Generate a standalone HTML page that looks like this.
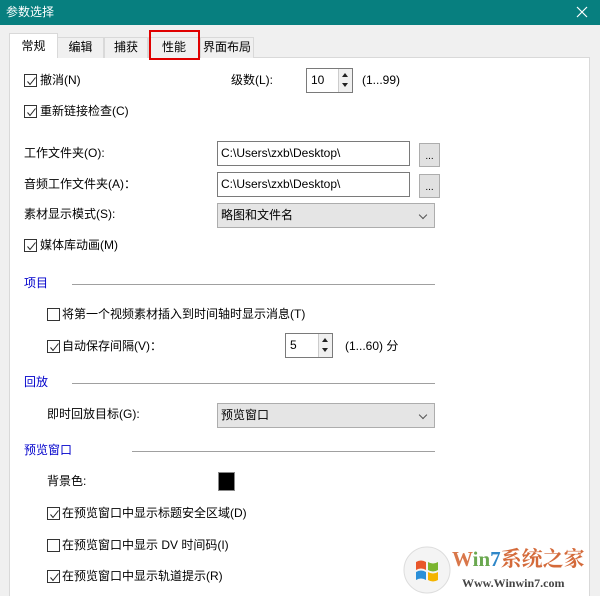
<!DOCTYPE html>
<html style="width:600px;height:596px;overflow:hidden"><head><meta charset="utf-8"><style>
*{margin:0;padding:0;box-sizing:border-box}
body{width:600px;height:596px;background:#f0f0f0;position:relative;overflow:hidden;font-family:"Liberation Sans","Noto Sans CJK SC",sans-serif;font-size:12px;color:#000}
.a{position:absolute;white-space:nowrap;line-height:16px}
.title{position:absolute;left:0;top:0;width:600px;height:25px;background:#077f7f;color:#fff;font-size:12px;line-height:24px;padding-left:6px}
.panel{position:absolute;left:9px;top:57px;width:581px;height:545px;background:#fff;border:1px solid #d9d9d9}
.tab{position:absolute;top:37px;height:21px;border:1px solid #d9d9d9;border-bottom:none;background:#f0f0f0;text-align:center;line-height:18px;white-space:nowrap}
.cb{position:absolute;width:13px;height:13px;border:1px solid #333;background:#fff}
.cb svg{position:absolute;left:1px;top:1px}
.inp{position:absolute;border:1px solid #7a7a7a;background:#fff;padding-left:3px;line-height:22px}
.btn{position:absolute;border:1px solid #adadad;background:#e1e1e1;text-align:center;font-size:10px;line-height:26px}
.cmb{position:absolute;border:1px solid #adadad;background:#e5e5e5;padding-left:3px;line-height:23px}
.cmb:after{content:"";position:absolute;right:8px;top:8px;width:5px;height:5px;border-right:1px solid #555;border-bottom:1px solid #555;transform:rotate(45deg)}
.spin{position:absolute;border:1px solid #7a7a7a;background:#fff;padding-left:4px;line-height:22px}
.sp{position:absolute;right:0;top:0;width:14px;height:100%;border-left:1px solid #ccc;background:#f0f0f0}
.sp i{position:absolute;left:3px;width:0;height:0;border-left:3px solid transparent;border-right:3px solid transparent}
.blue{color:#0000cc}
.line{position:absolute;height:1px;background:#a0a0a0}
</style></head><body>
<div class="title">参数选择</div>
<svg style="position:absolute;left:576px;top:6px" width="12" height="12"><path d="M1 1L11 11M11 1L1 11" stroke="#fff" stroke-width="1.2"/></svg>
<div class="panel"></div>
<div class="tab" style="left:57px;width:47px">编辑</div>
<div class="tab" style="left:104px;width:44px">捕获</div>
<div class="tab" style="left:148px;width:52px">性能</div>
<div class="tab" style="left:200px;width:54px">界面布局</div>
<div class="tab" style="left:9px;top:33px;height:25px;width:49px;background:#fff;line-height:24px;z-index:2">常规</div>
<div style="position:absolute;left:149px;top:30px;width:51px;height:30px;border:2px solid #e00000;z-index:3"></div>

<div class="cb" style="left:24px;top:74px"><svg width="11" height="11"><path d="M1.5 5.5L4 8.5L9.5 1.5" stroke="#222" fill="none"/></svg></div>
<div class="a" style="left:40px;top:72px">撤消(N)</div>
<div class="a" style="left:231px;top:72px">级数(L):</div>
<div class="spin" style="left:306px;top:68px;width:47px;height:25px">10<div class="sp"><i style="top:4px;border-bottom:4px solid #222"></i><i style="top:14px;border-top:4px solid #222"></i></div></div>
<div class="a" style="left:362px;top:72px">(1...99)</div>

<div class="cb" style="left:24px;top:105px"><svg width="11" height="11"><path d="M1.5 5.5L4 8.5L9.5 1.5" stroke="#222" fill="none"/></svg></div>
<div class="a" style="left:40px;top:103px">重新链接检查(C)</div>

<div class="a" style="left:24px;top:145px">工作文件夹(O):</div>
<div class="inp" style="left:217px;top:141px;width:193px;height:25px">C:\Users\zxb\Desktop\</div>
<div class="btn" style="left:419px;top:143px;width:21px;height:24px">...</div>
<div class="a" style="left:24px;top:176px">音频工作文件夹(A)：</div>
<div class="inp" style="left:217px;top:172px;width:193px;height:25px">C:\Users\zxb\Desktop\</div>
<div class="btn" style="left:419px;top:174px;width:21px;height:24px">...</div>
<div class="a" style="left:24px;top:206px">素材显示模式(S):</div>
<div class="cmb" style="left:217px;top:203px;width:218px;height:25px">略图和文件名</div>

<div class="cb" style="left:24px;top:239px"><svg width="11" height="11"><path d="M1.5 5.5L4 8.5L9.5 1.5" stroke="#222" fill="none"/></svg></div>
<div class="a" style="left:40px;top:237px">媒体库动画(M)</div>

<div class="a blue" style="left:24px;top:275px">项目</div>
<div class="line" style="left:72px;top:284px;width:363px"></div>
<div class="cb" style="left:47px;top:308px"></div>
<div class="a" style="left:62px;top:306px">将第一个视频素材插入到时间轴时显示消息(T)</div>
<div class="cb" style="left:47px;top:340px"><svg width="11" height="11"><path d="M1.5 5.5L4 8.5L9.5 1.5" stroke="#222" fill="none"/></svg></div>
<div class="a" style="left:62px;top:338px">自动保存间隔(V)：</div>
<div class="spin" style="left:285px;top:333px;width:48px;height:25px">5<div class="sp"><i style="top:4px;border-bottom:4px solid #222"></i><i style="top:14px;border-top:4px solid #222"></i></div></div>
<div class="a" style="left:345px;top:338px">(1...60) 分</div>

<div class="a blue" style="left:24px;top:374px">回放</div>
<div class="line" style="left:72px;top:383px;width:363px"></div>
<div class="a" style="left:47px;top:406px">即时回放目标(G):</div>
<div class="cmb" style="left:217px;top:403px;width:218px;height:25px">预览窗口</div>

<div class="a blue" style="left:24px;top:442px">预览窗口</div>
<div class="line" style="left:132px;top:451px;width:303px"></div>
<div class="a" style="left:47px;top:473px">背景色:</div>
<div style="position:absolute;left:218px;top:472px;width:17px;height:19px;background:#000;border:1px solid #888"></div>
<div class="cb" style="left:47px;top:507px"><svg width="11" height="11"><path d="M1.5 5.5L4 8.5L9.5 1.5" stroke="#222" fill="none"/></svg></div>
<div class="a" style="left:62px;top:505px">在预览窗口中显示标题安全区域(D)</div>
<div class="cb" style="left:47px;top:539px"></div>
<div class="a" style="left:62px;top:537px">在预览窗口中显示 DV 时间码(I)</div>
<div class="cb" style="left:47px;top:570px"><svg width="11" height="11"><path d="M1.5 5.5L4 8.5L9.5 1.5" stroke="#222" fill="none"/></svg></div>
<div class="a" style="left:62px;top:568px">在预览窗口中显示轨道提示(R)</div>

<svg style="position:absolute;left:403px;top:546px" width="48" height="48"><circle cx="24" cy="24" r="23" fill="#f4f4f4" stroke="#ddd"/><path d="M13 16q5-3 10 0v8q-5-3-10 0z" fill="#e8562a"/><path d="M25 16q5 3 10 0v8q-5 3-10 0z" fill="#7bb52f"/><path d="M13 26q5-3 10 0v8q-5-3-10 0z" fill="#2a8fd8"/><path d="M25 26q5 3 10 0v8q-5 3-10 0z" fill="#f4b400"/></svg>
<div class="a" style="left:452px;top:547px;font-size:21px;line-height:24px;font-weight:bold;font-family:'Liberation Serif','Noto Serif CJK SC',serif"><span style="color:#d9774a">W</span><span style="color:#6aa84f">in</span><span style="color:#2f87c8">7</span><span style="color:#d46a3a">系统之家</span></div>
<div class="a" style="left:462px;top:575px;font-size:12px;font-weight:bold;color:#444;font-family:'Liberation Serif',serif">Www.Winwin7.com</div>
</body></html>
